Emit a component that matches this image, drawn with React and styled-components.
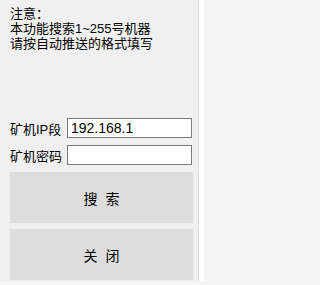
import React, { useState } from 'react';
import styled, { createGlobalStyle } from 'styled-components';

const GlobalStyle = createGlobalStyle`
    html, body {
        margin: 0;
        padding: 0;
        background: #f5f5f5;
    }
    body {
        font-family: "Liberation Sans", "Noto Sans CJK SC", sans-serif;
    }
`;

const Frame = styled.div`
    width: 204px;
    height: 281px;
    background: #ffffff;
    display: flex;
`;

const Window = styled.div`
    width: 199px;
    height: 281px;
    box-sizing: border-box;
    background: #f0f0f0;
    border-right: 1px solid #dcdcdc;
    padding: 6px 6px 0 10px;
    display: flex;
    flex-direction: column;
`;

const Notice = styled.div`
    font-size: 13px;
    line-height: 15px;
    color: #000;
    white-space: nowrap;
`;

const Form = styled.div`
    margin-top: 67px;
    display: flex;
    flex-direction: column;
    gap: 7px;
`;

const Row = styled.div`
    display: flex;
    align-items: center;
    height: 20px;
`;

const Label = styled.label`
    width: 58px;
    font-size: 13px;
    color: #000;
    white-space: nowrap;
`;

const Input = styled.input`
    width: 125px;
    height: 20px;
    box-sizing: border-box;
    margin: 0;
    border: 1px solid #7a7a7a;
    background: #fff;
    padding: 0 3px;
    font-family: "Liberation Sans", sans-serif;
    font-size: 14px;
    color: #000;
    outline: none;
`;

const Buttons = styled.div`
    margin-top: 7px;
    display: flex;
    flex-direction: column;
    gap: 6px;
`;

const Button = styled.button`
    width: 183px;
    height: 51px;
    margin: 0;
    border: none;
    background: #dddddd;
    font-family: "Noto Sans CJK SC", sans-serif;
    font-size: 14px;
    word-spacing: 5px;
    color: #000;
    padding: 0;
    cursor: pointer;
`;

export default function App() {
    const [ip, setIp] = useState('192.168.1');
    const [pwd, setPwd] = useState('');

    return (
        <>
            <GlobalStyle />
            <Frame>
                <Window>
                    <Notice>
                        注意：<br />
                        本功能搜索1~255号机器<br />
                        请按自动推送的格式填写
                    </Notice>
                    <Form>
                        <Row>
                            <Label>矿机IP段</Label>
                            <Input value={ip} onChange={(e) => setIp(e.target.value)} />
                        </Row>
                        <Row>
                            <Label>矿机密码</Label>
                            <Input type="password" value={pwd} onChange={(e) => setPwd(e.target.value)} />
                        </Row>
                    </Form>
                    <Buttons>
                        <Button>搜 索</Button>
                        <Button>关 闭</Button>
                    </Buttons>
                </Window>
            </Frame>
        </>
    );
}
